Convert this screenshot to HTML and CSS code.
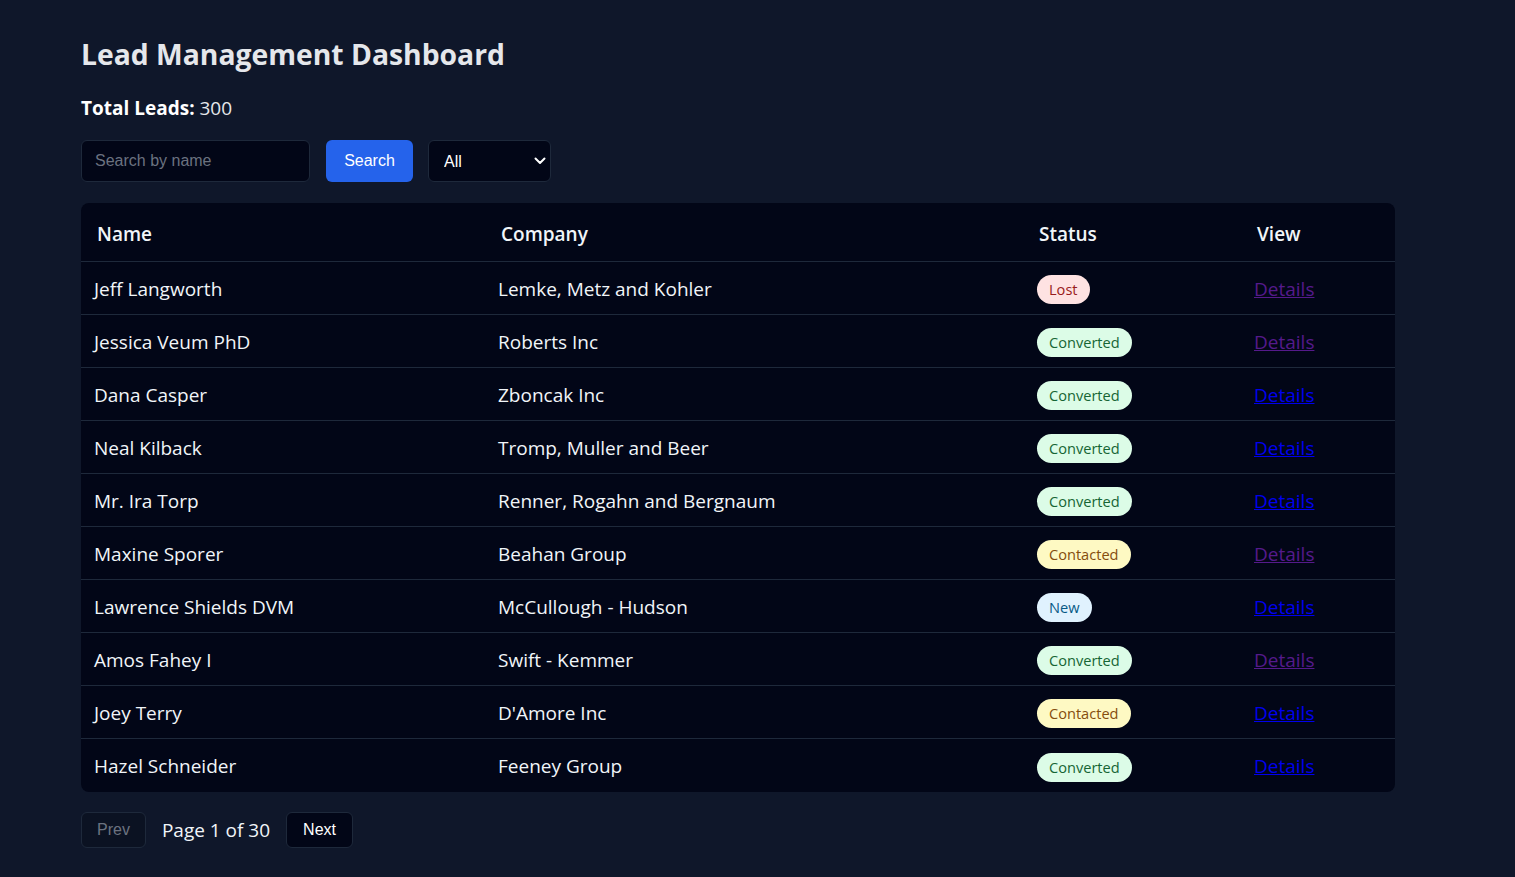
FILE: index.html
```html
<!DOCTYPE html>
<html>
<head>
    <title>Lead Management Dashboard</title>
    <link rel="stylesheet" href="styles.css">
</head>
<body>
    <div class="page">
        <h1>Lead Management Dashboard</h1>
        <p class="total"><strong>Total Leads:</strong> 300</p>

        <div class="controls">
            <input type="text" class="search-input" placeholder="Search by name">
            <button class="search-btn">Search</button>
            <div class="select-wrap">
                <select class="status-select">
                    <option>All</option>
                    <option>New</option>
                    <option>Contacted</option>
                    <option>Converted</option>
                    <option>Lost</option>
                </select>
                <svg class="chevron" width="12" height="8" viewBox="0 0 12 8">
                    <path d="M1.5 1.5 L6 6 L10.5 1.5" fill="none" stroke="#fff" stroke-width="2" stroke-linecap="round" stroke-linejoin="round"/>
                </svg>
            </div>
        </div>

        <div class="table-card">
            <table>
                <colgroup>
                    <col style="width: 404px">
                    <col style="width: 538px">
                    <col style="width: 218px">
                    <col style="width: 154px">
                </colgroup>
                <thead>
                    <tr>
                        <th>Name</th>
                        <th>Company</th>
                        <th>Status</th>
                        <th>View</th>
                    </tr>
                </thead>
                <tbody>
                    <tr>
                        <td>Jeff Langworth</td>
                        <td>Lemke, Metz and Kohler</td>
                        <td class="status"><span class="badge lost">Lost</span></td>
                        <td><a href="#" class="visited">Details</a></td>
                    </tr>
                    <tr>
                        <td>Jessica Veum PhD</td>
                        <td>Roberts Inc</td>
                        <td class="status"><span class="badge converted">Converted</span></td>
                        <td><a href="#" class="visited">Details</a></td>
                    </tr>
                    <tr>
                        <td>Dana Casper</td>
                        <td>Zboncak Inc</td>
                        <td class="status"><span class="badge converted">Converted</span></td>
                        <td><a href="#">Details</a></td>
                    </tr>
                    <tr>
                        <td>Neal Kilback</td>
                        <td>Tromp, Muller and Beer</td>
                        <td class="status"><span class="badge converted">Converted</span></td>
                        <td><a href="#">Details</a></td>
                    </tr>
                    <tr>
                        <td>Mr. Ira Torp</td>
                        <td>Renner, Rogahn and Bergnaum</td>
                        <td class="status"><span class="badge converted">Converted</span></td>
                        <td><a href="#">Details</a></td>
                    </tr>
                    <tr>
                        <td>Maxine Sporer</td>
                        <td>Beahan Group</td>
                        <td class="status"><span class="badge contacted">Contacted</span></td>
                        <td><a href="#" class="visited">Details</a></td>
                    </tr>
                    <tr>
                        <td>Lawrence Shields DVM</td>
                        <td>McCullough - Hudson</td>
                        <td class="status"><span class="badge new">New</span></td>
                        <td><a href="#">Details</a></td>
                    </tr>
                    <tr>
                        <td>Amos Fahey I</td>
                        <td>Swift - Kemmer</td>
                        <td class="status"><span class="badge converted">Converted</span></td>
                        <td><a href="#" class="visited">Details</a></td>
                    </tr>
                    <tr>
                        <td>Joey Terry</td>
                        <td>D'Amore Inc</td>
                        <td class="status"><span class="badge contacted">Contacted</span></td>
                        <td><a href="#">Details</a></td>
                    </tr>
                    <tr>
                        <td>Hazel Schneider</td>
                        <td>Feeney Group</td>
                        <td class="status"><span class="badge converted">Converted</span></td>
                        <td><a href="#">Details</a></td>
                    </tr>
                </tbody>
            </table>
        </div>

        <div class="pagination">
            <button class="page-btn" disabled>Prev</button>
            <span class="page-info">Page 1 of 30</span>
            <button class="page-btn next">Next</button>
        </div>
    </div>
</body>
</html>
```

FILE: styles.css
```css
body {
    margin: 0;
    background: #0f172a;
    color: #e5e7eb;
    font-family: "Open Sans", "Noto Sans", sans-serif;
    min-height: 100vh;
}

.page {
    width: 1314px;
    padding: 36px 0 0 81px;
}

h1 {
    margin: 0;
    font-size: 28.3px;
    line-height: 36px;
    font-weight: 700;
    color: #e5e7eb;
}

.total {
    margin: 22px 0 0;
    font-size: 19px;
    line-height: 28px;
}

.total strong {
    font-weight: 700;
    color: #fff;
}

.controls {
    display: flex;
    gap: 16px;
    margin-top: 18px;
}

.search-input {
    width: 229px;
    height: 42px;
    box-sizing: border-box;
    padding: 0 13px;
    background: #020617;
    border: 1px solid #1e293b;
    border-radius: 6px;
    color: #fff;
    font-family: "Liberation Sans", Arial, sans-serif;
    font-size: 16px;
    outline: none;
}

.search-input::placeholder {
    color: #6b7280;
}

.search-btn {
    height: 42px;
    width: 87px;
    background: #2563eb;
    color: #fff;
    border: none;
    border-radius: 6px;
    font-family: "Liberation Sans", Arial, sans-serif;
    font-size: 16px;
}

.select-wrap {
    position: relative;
    margin-left: -1px;
}

.status-select {
    appearance: none;
    width: 123px;
    height: 42px;
    padding: 0 15px;
    background: #020617;
    border: 1px solid #1e293b;
    border-radius: 6px;
    color: #fff;
    font-family: "Liberation Sans", Arial, sans-serif;
    font-size: 16px;
    outline: none;
}

.chevron {
    position: absolute;
    right: 5px;
    top: 17px;
    pointer-events: none;
}

.table-card {
    margin-top: 21px;
    background: #020617;
    border-radius: 8px;
    overflow: hidden;
}

table {
    width: 100%;
    border-collapse: collapse;
    table-layout: fixed;
}

th {
    text-align: left;
    font-size: 19px;
    font-weight: 600;
    color: #f1f5f9;
    height: 58px;
    padding: 4px 16px 0;
    box-sizing: border-box;
    border-bottom: 1px solid #1e293b;
}

td {
    font-size: 19px;
    color: #f1f5f9;
    height: 53px;
    padding: 2px 13px 0;
    box-sizing: border-box;
    border-bottom: 1px solid #1e293b;
}

td.status {
    padding-left: 14px;
}

tbody tr:last-child td {
    border-bottom: none;
    height: 54px;
}

.badge {
    display: inline-block;
    font-size: 14.6px;
    line-height: 29px;
    padding: 0 12px;
    border-radius: 999px;
    vertical-align: -2px;
}

.lost {
    background: #fee2e2;
    color: #991b1b;
}

.converted {
    background: #dcfce7;
    color: #166534;
}

.contacted {
    background: #fef9c3;
    color: #854d0e;
}

.new {
    background: #e0f2fe;
    color: #075985;
}

a {
    color: #0000ee;
}

a.visited {
    color: #551a8b;
}

.pagination {
    display: flex;
    align-items: center;
    gap: 16px;
    margin-top: 20px;
}

.page-btn {
    height: 36px;
    padding: 0 15px;
    background: #020617;
    border: 1px solid #1e293b;
    border-radius: 6px;
    color: #fff;
    font-family: "Liberation Sans", Arial, sans-serif;
    font-size: 16px;
}

.page-btn.next {
    padding: 0 16px;
}

.page-btn:disabled {
    background: #0b1222;
    color: #6b7280;
}

.page-info {
    font-size: 19px;
    color: #f1f5f9;
}
```
